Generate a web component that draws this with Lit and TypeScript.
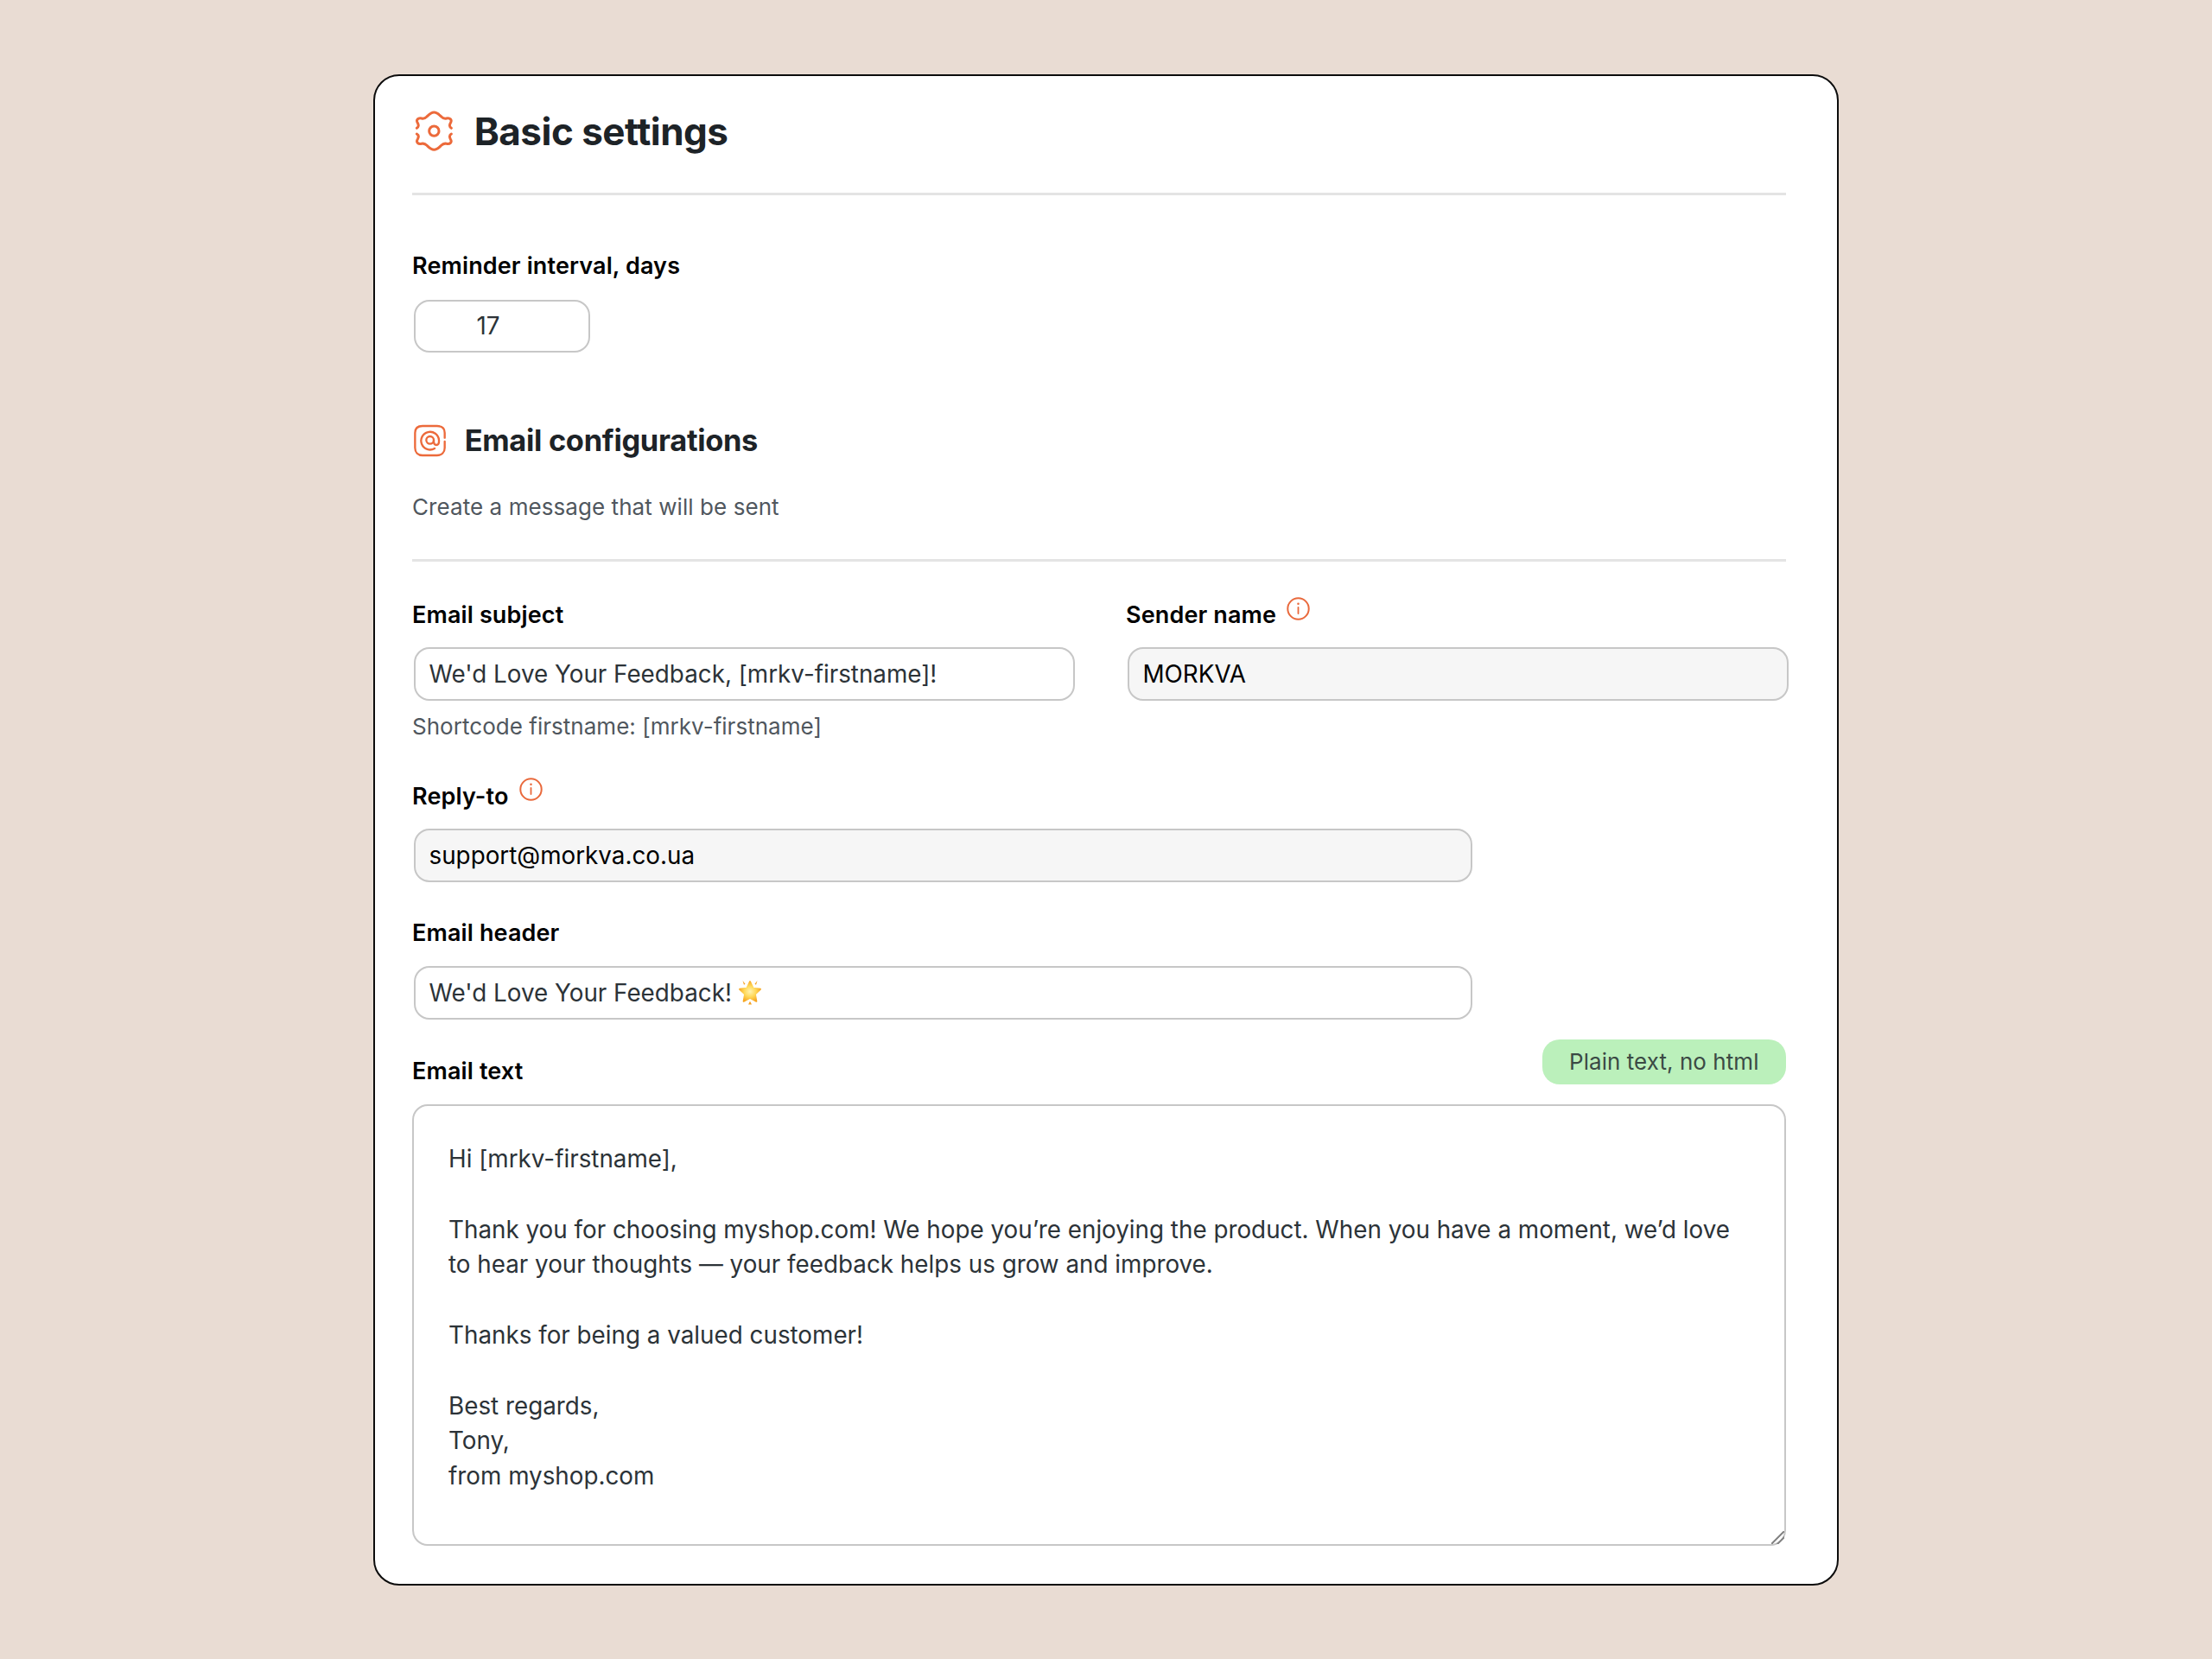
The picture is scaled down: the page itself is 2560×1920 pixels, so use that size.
import { LitElement, html, css, svg } from "lit";
import { customElement } from "lit/decorators.js";

const info = html`<svg class="info" viewBox="0 0 27 27" fill="none" stroke="#e9693c" stroke-width="2" stroke-linecap="round">
  <circle cx="13.5" cy="13.5" r="12.2"></circle>
  <path d="M13.5 12v7" stroke-width="1.8"></path>
  <circle cx="13.5" cy="7.800" r=".6" stroke-width="1.4"></circle>
</svg>`;

const star = svg`<svg class="star" viewBox="0 0 28 29">
  <defs>
    <radialGradient id="sg" cx="50%" cy="50%" r="55%">
      <stop offset="0" stop-color="#fff3b0"></stop>
      <stop offset=".5" stop-color="#ffd95a"></stop>
      <stop offset="1" stop-color="#f6a41f"></stop>
    </radialGradient>
  </defs>
  <path d="M14 4.500l3.100 6.300 6.900 1-5 4.900 1.200 6.900-6.200-3.300-6.200 3.300 1.200-6.900-5-4.900 6.900-1z" transform="translate(-2.800 -3.400) scale(1.200)" fill="url(#sg)" stroke="url(#sg)" stroke-width="1.500" stroke-linejoin="round"></path>
  <path d="M5.500 1l3 3.800-1.500 1zM22.500 1l-3 3.800 1.500 1zM14 24.800l2 3.700h-4z" fill="#f5a020"></path>
</svg>`;

@customElement("app-root")
export class AppRoot extends LitElement {
  static styles = css`
    :host {
      display: block;
      min-height: 1920px;
      background: #e9dcd3;
      padding: 86px 0 85px;
      box-sizing: border-box;
      font-family: Inter, "Liberation Sans", sans-serif;
      color: #2c3338;
    }
    .card {
      width: 1696px;
      height: 1749px;
      margin: 0 auto;
      box-sizing: border-box;
      background: #fff;
      border: 2px solid #0c0c0c;
      border-radius: 30px;
      padding: 40px 59px 42px 43px;
      display: flex;
      flex-direction: column;
    }
    .heading {
      display: flex;
      align-items: center;
      color: #1d2327;
      font-weight: 700;
      margin: 0;
    }
    h1.heading {
      height: 48px;
      font-size: 44px;
      letter-spacing: -0.5px;
      gap: 23px;
    }
    h2.heading {
      height: 40px;
      margin-top: 82px;
      font-size: 34.400px;
      letter-spacing: -0.3px;
      gap: 19px;
    }
    .gear {
      width: 46.700px;
      height: 48.300px;
      margin-left: 2px;
      flex: none;
    }
    .at {
      width: 41.700px;
      height: 40px;
      flex: none;
    }
    hr {
      width: 100%;
      height: 3px;
      border: 0;
      margin: 0;
      background: #e4e4e4;
      flex: none;
    }
    .hr-top { margin-top: 46.500px; }
    .hr-mid { margin-top: 44px; }
    .label {
      display: flex;
      align-items: center;
      gap: 12px;
      height: 32px;
      font-size: 27px;
      font-weight: 600;
      letter-spacing: 0.13px;
      color: #000;
      line-height: 32px;
    }
    .info {
      width: 27px;
      height: 27px;
      flex: none;
      transform: translateY(-8px);
    }
    .input {
      display: flex;
      align-items: center;
      gap: 7px;
      height: 62px;
      margin: 21px 0 0 1.500px;
      padding: 0 16px;
      box-sizing: border-box;
      border: 2.500px solid #c7c7c7;
      border-radius: 18px;
      background: #fff;
      font-size: 27.800px;
      color: #2c3338;
    }
    .input.off {
      background: #f6f6f6;
      color: #000;
    }
    .input.num {
      width: 204px;
      height: 61px;
      margin-top: 23px;
      padding-left: 71px;
    }
    .input.wide {
      width: 1225px;
    }
    .input.head-field {
      margin-top: 22px;
    }
    .star {
      width: 28px;
      height: 29px;
      flex: none;
    }
    .sub {
      margin-top: 41px;
      font-size: 26px;
      letter-spacing: 0.07px;
      line-height: 32px;
      color: #50575e;
    }
    .note {
      margin-top: 13.500px;
      font-size: 26px;
      letter-spacing: 0.03px;
      line-height: 32px;
      color: #50575e;
    }
    .two {
      display: grid;
      grid-template-columns: 767px 767px;
      column-gap: 59px;
      margin-top: 46.500px;
      width: 1594px;
    }
    .first { margin-top: 66px; }
    .gap-reply { margin-top: 49px; }
    .gap-header { margin-top: 43px; }
    .text-head {
      display: flex;
      justify-content: space-between;
      align-items: flex-end;
      height: 52px;
      margin-top: 23px;
    }
    .text-head .label {
      margin-bottom: -1px;
    }
    .badge {
      height: 52px;
      padding: 0 31.500px;
      display: flex;
      align-items: center;
      border-radius: 20px;
      background: #bbf0bb;
      color: #3b4a45;
      font-size: 26px;
      letter-spacing: 0.05px;
    }
    .area {
      margin-top: 23px;
      height: 511px;
      box-sizing: border-box;
      padding: 41.500px 40px 0 40px;
      border: 2.500px solid #c7c7c7;
      border-radius: 18px;
      font-size: 27.800px;
      line-height: 40.800px;
      color: #2c3338;
      white-space: pre-wrap;
      overflow: auto;
      resize: both;
    }
    .area::-webkit-resizer {
      background: linear-gradient(135deg, transparent 0 46%, #8a8a8a 46% 56%, transparent 56% 70%, #8a8a8a 70% 80%, transparent 80%);
    }
  `;

  render() {
    return html`<main class="card">
      <h1 class="heading">
        <svg class="gear" viewBox="25 40 140 145" fill="none" stroke="#ec6a3b" stroke-width="9" stroke-linecap="round">
          <path d="M35 101C42 97 42 90 38 83C31 72 40 64 52 67C60 69 64 67 70 61C78 53 84 46 95 46C106 46 112 53 120 61C126 67 130 69 138 67C150 64 159 72 152 83C148 90 148 97 155 101"></path>
          <path d="M155 121C148 125 148 132 152 139C159 150 150 158 138 155C130 153 126 155 120 161C112 169 106 176 95 176C84 176 78 169 70 161C64 155 60 153 52 155C40 158 31 150 38 139C42 132 42 125 35 121"></path>
          <circle cx="95" cy="111" r="17"></circle>
        </svg>
        Basic settings
      </h1>
      <hr class="hr-top" />
      <div class="label first">Reminder interval, days</div>
      <div class="input num">17</div>

      <h2 class="heading">
        <svg class="at" viewBox="20 35 125 120" fill="none" stroke="#ec6a3b" stroke-width="7" stroke-linecap="round">
          <path d="M133 85V68C133 52 122 44 106 44H56C40 44 30 52 30 68V120C30 136 40 146 56 146H106C122 146 133 136 133 120V98"></path>
          <path d="M98 122A31 31 0 1 1 113 93V99C113 106 109 110 104 110C98 110 95 105 95 99V93"></path>
          <circle cx="82" cy="93" r="13"></circle>
        </svg>
        Email configurations
      </h2>
      <div class="sub">Create a message that will be sent</div>
      <hr class="hr-mid" />

      <div class="two">
        <div>
          <div class="label">Email subject</div>
          <div class="input">We'd Love Your Feedback, [mrkv-firstname]!</div>
          <div class="note">Shortcode firstname: [mrkv-firstname]</div>
        </div>
        <div>
          <div class="label">Sender name ${info}</div>
          <div class="input off">MORKVA</div>
        </div>
      </div>

      <div class="label gap-reply">Reply-to ${info}</div>
      <div class="input off wide">support@morkva.co.ua</div>

      <div class="label gap-header">Email header</div>
      <div class="input wide head-field">We'd Love Your Feedback! ${star}</div>

      <div class="text-head">
        <div class="label">Email text</div>
        <div class="badge">Plain text, no html</div>
      </div>
      <div class="area">Hi [mrkv-firstname],

Thank you for choosing myshop.com! We hope you’re enjoying the product. When you have a moment, we’d love to hear your thoughts — your feedback helps us grow and improve.

Thanks for being a valued customer!

Best regards,
Tony,
from myshop.com</div>
    </main>`;
  }
}
